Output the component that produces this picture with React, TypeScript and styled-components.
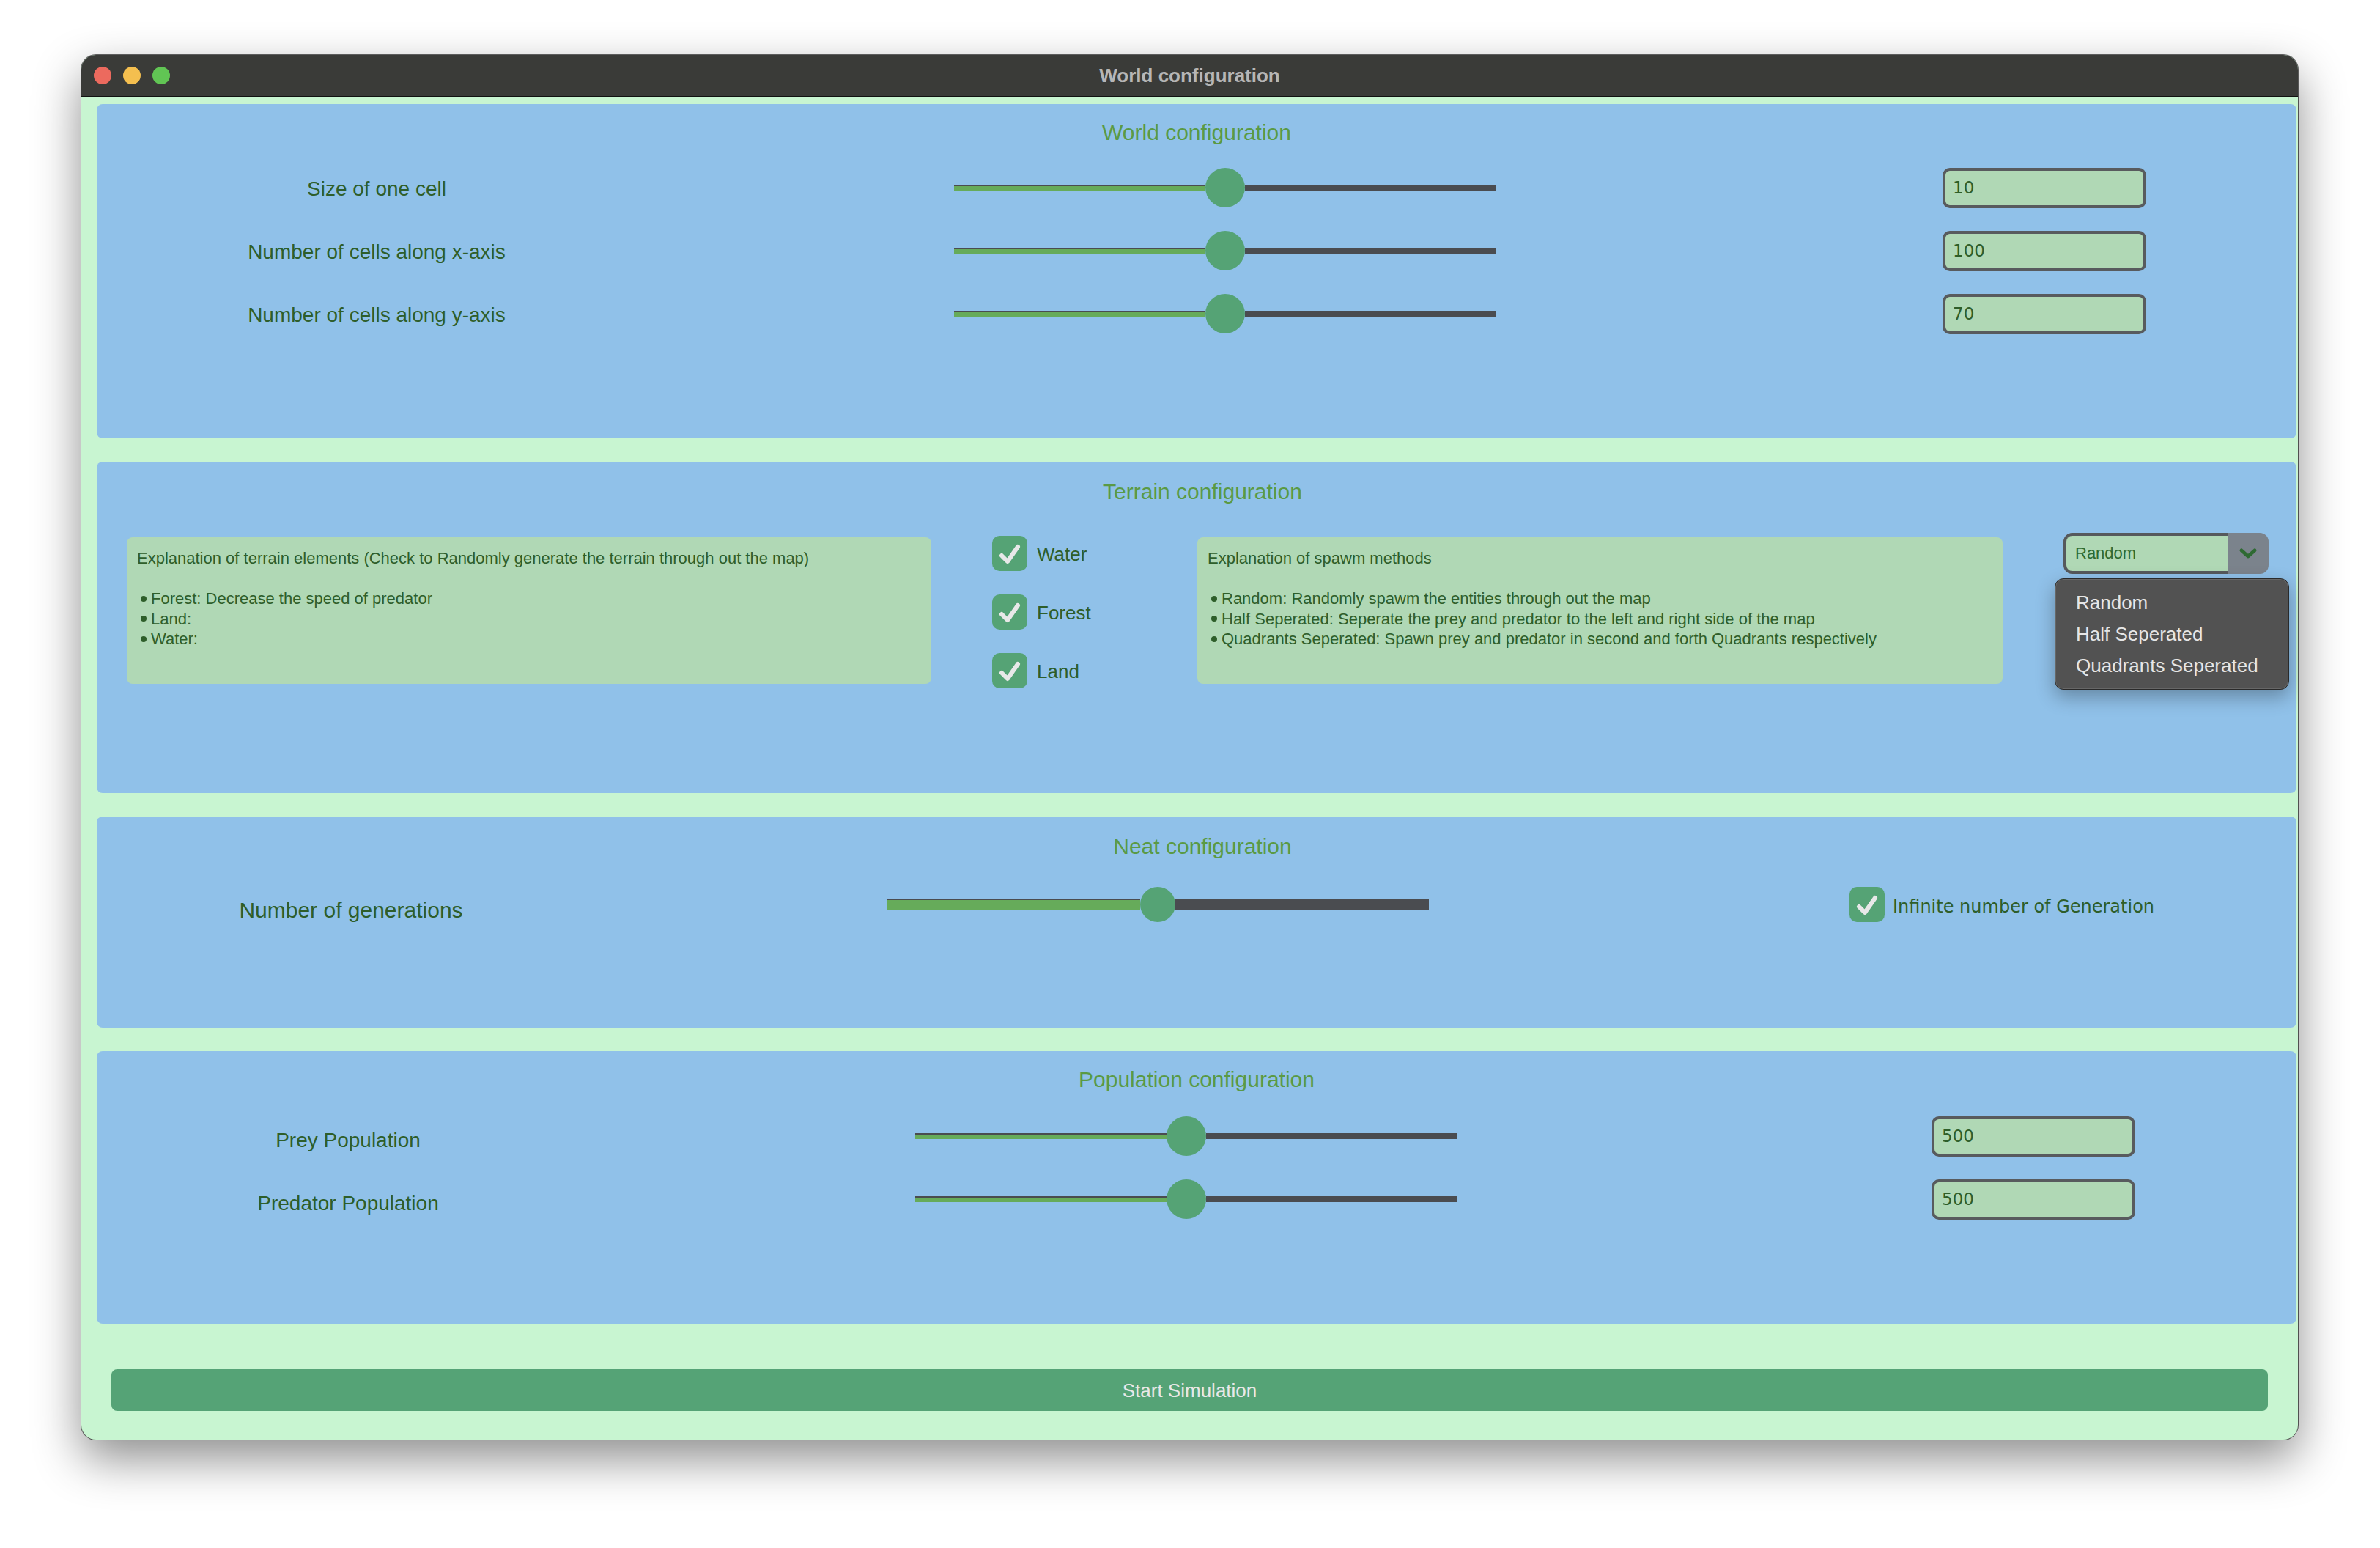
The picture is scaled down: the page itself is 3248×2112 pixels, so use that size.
import styled, { createGlobalStyle } from "styled-components";

const GlobalStyle = createGlobalStyle`
  html, body {
    margin: 0;
    padding: 0;
    background: #ffffff;
  }
  body {
    width: 3248px;
    height: 2112px;
    overflow: hidden;
    font-family: "Liberation Sans", Arial, sans-serif;
  }
`;

const Desk = styled.div`
  padding: 75px 0 0 111px;
`;

const Window = styled.div`
  width: 3025px;
  height: 1889px;
  border-radius: 20px;
  overflow: hidden;
  background: #c8f5d1;
  display: flex;
  flex-direction: column;
  box-shadow: 0 0 0 1px rgba(0, 0, 0, 0.6), 0 26px 64px rgba(0, 0, 0, 0.45);
`;

const TitleBar = styled.div`
  height: 56px;
  flex-shrink: 0;
  background: #3a3b38;
  border-bottom: 1px solid #111111;
  display: grid;
  grid-template-columns: 1fr auto 1fr;
  align-items: center;
`;

const Lights = styled.div`
  display: flex;
  gap: 16px;
  padding-left: 17px;
`;

const Light = styled.span<{ color: string }>`
  width: 24px;
  height: 24px;
  border-radius: 50%;
  background: ${(p) => p.color};
`;

const WindowTitle = styled.div`
  font-size: 26px;
  font-weight: bold;
  color: #b6b6b6;
`;

const Panels = styled.div`
  display: flex;
  flex-direction: column;
  gap: 32px;
  padding: 10px 2px 0 21px;
`;

const Panel = styled.section<{ h: number }>`
  height: ${(p) => p.h}px;
  box-sizing: border-box;
  background: #90c1e9;
  border-radius: 8px;
  padding-top: 21px;
`;

const PanelTitle = styled.div<{ shift?: number }>`
  text-align: center;
  font-size: 30px;
  line-height: 36px;
  padding-left: ${(p) => (p.shift ?? 0) * 2}px;
  padding-top: ${(p) => (p.shift ? 2 : 0)}px;
  color: #5a9a45;
`;

const Rows = styled.div<{ top: number }>`
  margin-top: ${(p) => p.top}px;
`;

const Row = styled.div<{ cols: string }>`
  display: grid;
  grid-template-columns: ${(p) => p.cols};
  align-items: center;
  height: 86px;
`;

const Label = styled.div<{ size?: number; drop?: number }>`
  text-align: center;
  font-size: ${(p) => p.size ?? 28}px;
  padding-top: ${(p) => p.drop ?? 0}px;
  color: #2e5e2a;
`;

const SliderBox = styled.div`
  width: 740px;
  justify-self: end;
  display: flex;
  align-items: center;
`;

const Filled = styled.div<{ thick: number }>`
  flex: 1;
  height: ${(p) => p.thick}px;
  box-sizing: border-box;
  background: #66ab5a;
  border-top: 2px solid #4a4c50;
`;

const Empty = styled.div<{ thick: number }>`
  flex: 1;
  height: ${(p) => p.thick}px;
  background: #4a4c50;
`;

const Thumb = styled.div<{ size: number }>`
  width: ${(p) => p.size}px;
  height: ${(p) => p.size}px;
  border-radius: 50%;
  background: #55a375;
  flex-shrink: 0;
`;

const ValueBox = styled.input`
  justify-self: end;
  width: 278px;
  height: 55px;
  box-sizing: border-box;
  border: 4px solid #585b5e;
  border-radius: 10px;
  background: #b0d8b5;
  color: #2e5e2a;
  font-family: "DejaVu Sans", sans-serif;
  font-size: 23px;
  padding: 0 10px;
  outline: none;
`;

const TerrainGrid = styled.div`
  display: grid;
  grid-template-columns: 1098px 197px 1099px 280px;
  column-gap: 83px;
  align-items: start;
  padding-left: 41px;
  margin-top: 38px;
`;

const InfoBox = styled.div`
  margin-top: 6px;
  height: 200px;
  box-sizing: border-box;
  background: #b0d8b5;
  border-radius: 8px;
  padding: 15px 14px;
  font-size: 22px;
  line-height: 27.5px;
  color: #2e5e2a;
`;

const InfoGap = styled.div`
  height: 27.5px;
`;

const Bullet = styled.div`
  display: flex;
  align-items: center;
  padding-left: 5px;
`;

const Dot = styled.span`
  width: 8px;
  height: 8px;
  border-radius: 50%;
  background: #2e5e2a;
  margin-right: 6px;
  flex-shrink: 0;
`;

const CheckList = styled.div`
  display: flex;
  flex-direction: column;
  gap: 32px;
  margin-top: 4px;
`;

const CheckItem = styled.div<{ gap: number }>`
  display: flex;
  align-items: center;
  gap: ${(p) => p.gap}px;
`;

const CheckBox = styled.div`
  width: 48px;
  height: 48px;
  border-radius: 10px;
  background: #55a375;
  flex-shrink: 0;
  display: flex;
  align-items: center;
  justify-content: center;
`;

const CheckText = styled.span<{ mono?: boolean }>`
  font-family: ${(p) =>
    p.mono ? '"DejaVu Sans", sans-serif' : '"Liberation Sans", Arial, sans-serif'};
  font-size: ${(p) => (p.mono ? 24 : 26)}px;
  padding-top: ${(p) => (p.mono ? 6 : 2)}px;
  color: #2e5e2a;
`;

const ComboWrap = styled.div`
  position: relative;
`;

const Combo = styled.div`
  width: 280px;
  height: 56px;
  display: flex;
  border-radius: 12px;
  overflow: hidden;
  background: #7b838c;
`;

const ComboField = styled.div`
  flex: 1;
  box-sizing: border-box;
  border: 4px solid #56595c;
  border-right: none;
  border-radius: 12px 0 0 12px;
  background: #b0d8b5;
  padding-left: 12px;
  display: flex;
  align-items: center;
  font-size: 22px;
  color: #2e6a2f;
`;

const ComboArrow = styled.div`
  width: 56px;
  display: flex;
  align-items: center;
  justify-content: center;
`;

const Popup = styled.div`
  position: absolute;
  left: -12px;
  top: 62px;
  width: 320px;
  height: 152px;
  box-sizing: border-box;
  background: #525252;
  border: 1px solid #2a2a2a;
  border-radius: 12px;
  padding-top: 11px;
  box-shadow: inset 0 0 0 1px rgba(255, 255, 255, 0.12),
    0 10px 26px rgba(0, 0, 0, 0.3);
  z-index: 2;
`;

const PopupItem = styled.div`
  padding-left: 28px;
  height: 43px;
  line-height: 43px;
  font-size: 26px;
  color: #e6e6e6;
`;

const Footer = styled.div`
  padding: 62px 41px 0;
`;

const StartButton = styled.button`
  width: 100%;
  height: 57px;
  border: none;
  border-radius: 8px;
  background: #55a376;
  color: #e8e8e8;
  font-family: "Liberation Sans", Arial, sans-serif;
  font-size: 26px;
  padding-top: 3px;
`;

function Slider({ thick = 8, thumb = 54 }: { thick?: number; thumb?: number }) {
  return (
    <SliderBox>
      <Filled thick={thick} />
      <Thumb size={thumb} />
      <Empty thick={thick} />
    </SliderBox>
  );
}

function Check() {
  return (
    <CheckBox>
      <svg width="48" height="48" viewBox="0 0 48 48">
        <polyline
          points="13,27 21,35 35,15"
          fill="none"
          stroke="#e8e8e8"
          strokeWidth="6"
          strokeLinecap="round"
          strokeLinejoin="round"
        />
      </svg>
    </CheckBox>
  );
}

const worldRows = [
  { label: "Size of one cell", value: "10" },
  { label: "Number of cells along x-axis", value: "100" },
  { label: "Number of cells along y-axis", value: "70" },
];

const populationRows = [
  { label: "Prey Population", value: "500" },
  { label: "Predator Population", value: "500" },
];

const terrainNotes = ["Forest: Decrease the speed of predator", "Land:", "Water:"];

const spawnNotes = [
  "Random: Randomly spawm the entities through out the map",
  "Half Seperated: Seperate the prey and predator to the left and right side of the map",
  "Quadrants Seperated: Spawn prey and predator in second and forth Quadrants respectively",
];

export default function App() {
  return (
    <>
      <GlobalStyle />
      <Desk>
        <Window>
          <TitleBar>
            <Lights>
              <Light color="#ec6a5e" />
              <Light color="#f4bf4f" />
              <Light color="#61c554" />
            </Lights>
            <WindowTitle>World configuration</WindowTitle>
            <div />
          </TitleBar>

          <Panels>
            <Panel h={456}>
              <PanelTitle>World configuration</PanelTitle>
              <Rows top={14}>
                {worldRows.map((r) => (
                  <Row key={r.label} cols="764px 1146px 887px">
                    <Label drop={4}>{r.label}</Label>
                    <Slider />
                    <ValueBox readOnly value={r.value} />
                  </Row>
                ))}
              </Rows>
            </Panel>

            <Panel h={452}>
              <PanelTitle shift={8}>Terrain configuration</PanelTitle>
              <TerrainGrid>
                <InfoBox>
                  <div>
                    Explanation of terrain elements (Check to Randomly generate the
                    terrain through out the map)
                  </div>
                  <InfoGap />
                  {terrainNotes.map((n) => (
                    <Bullet key={n}>
                      <Dot />
                      {n}
                    </Bullet>
                  ))}
                </InfoBox>
                <CheckList>
                  {["Water", "Forest", "Land"].map((t) => (
                    <CheckItem key={t} gap={13}>
                      <Check />
                      <CheckText>{t}</CheckText>
                    </CheckItem>
                  ))}
                </CheckList>
                <InfoBox>
                  <div>Explanation of spawm methods</div>
                  <InfoGap />
                  {spawnNotes.map((n) => (
                    <Bullet key={n}>
                      <Dot />
                      {n}
                    </Bullet>
                  ))}
                </InfoBox>
                <ComboWrap>
                  <Combo>
                    <ComboField>Random</ComboField>
                    <ComboArrow>
                      <svg width="26" height="16" viewBox="0 0 26 16">
                        <polyline
                          points="4,4 13,12 22,4"
                          fill="none"
                          stroke="#2e6a32"
                          strokeWidth="5"
                          strokeLinecap="round"
                          strokeLinejoin="round"
                        />
                      </svg>
                    </ComboArrow>
                  </Combo>
                  <Popup>
                    <PopupItem>Random</PopupItem>
                    <PopupItem>Half Seperated</PopupItem>
                    <PopupItem>Quadrants Seperated</PopupItem>
                  </Popup>
                </ComboWrap>
              </TerrainGrid>
            </Panel>

            <Panel h={288}>
              <PanelTitle shift={8}>Neat configuration</PanelTitle>
              <Rows top={18}>
                <Row cols="694px 1124px 574px auto">
                  <Label size={30} drop={16}>
                    Number of generations
                  </Label>
                  <Slider thick={16} thumb={48} />
                  <div />
                  <CheckItem gap={11}>
                    <Check />
                    <CheckText mono>Infinite number of Generation</CheckText>
                  </CheckItem>
                </Row>
              </Rows>
            </Panel>

            <Panel h={372}>
              <PanelTitle>Population configuration</PanelTitle>
              <Rows top={16}>
                {populationRows.map((r) => (
                  <Row key={r.label} cols="686px 1171px 925px">
                    <Label drop={12}>{r.label}</Label>
                    <Slider />
                    <ValueBox readOnly value={r.value} />
                  </Row>
                ))}
              </Rows>
            </Panel>
          </Panels>

          <Footer>
            <StartButton>Start Simulation</StartButton>
          </Footer>
        </Window>
      </Desk>
    </>
  );
}
